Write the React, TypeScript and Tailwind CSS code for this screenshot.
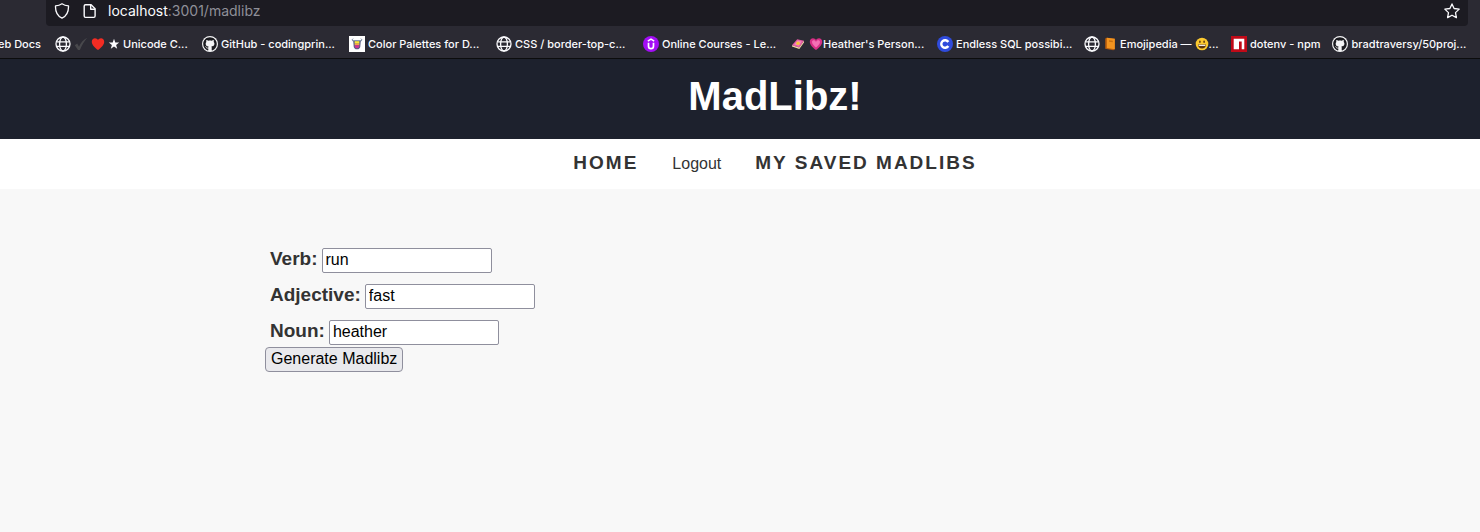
import { useState, type ReactNode } from 'react';
import { FaGithub } from 'react-icons/fa';

function Globe() {
  return (
    <svg viewBox="0 0 16 16" className="size-4 shrink-0" fill="none" stroke="#fbfbfe" strokeWidth="1.3" aria-hidden="true">
      <circle cx="8" cy="8" r="7" />
      <ellipse cx="8" cy="8" rx="3.4" ry="7" />
      <path d="M1.5 5.9h13M1.5 10.3h13" />
    </svg>
  );
}

function Github() {
  return (
    <span className="flex size-4 shrink-0 items-center justify-center rounded-full bg-[#f4f4f6]">
      <FaGithub className="size-3.5 text-[#1b1b20]" />
    </span>
  );
}

function Check() {
  return (
    <svg viewBox="0 0 14 14" className="size-3.5 shrink-0" aria-hidden="true">
      <path d="M.8 8.200 3.200 6.600 5 9.800C6.600 6 9.200 2.800 13.200.8 10.300 4.300 7.900 8.200 5.900 13H4Z" fill="#48484c" />
    </svg>
  );
}

function Heart() {
  return (
    <svg viewBox="0 0 14 14" className="size-3.5 shrink-0" aria-hidden="true">
      <path d="M7 13C4 10.700.8 8 .8 4.700.8 2.600 2.200 1.200 4 1.200c1.300 0 2.400.7 3 1.900.6-1.200 1.700-1.900 3-1.900 1.800 0 3.200 1.400 3.200 3.500C13.200 8 10 10.700 7 13Z" fill="#f32c23" />
    </svg>
  );
}

function PinkHeart() {
  return (
    <svg viewBox="0 0 14 14" className="size-3.5 shrink-0" aria-hidden="true">
      <path d="M7 13C4 10.700.8 8 .8 4.700.8 2.600 2.200 1.200 4 1.200c1.300 0 2.400.7 3 1.900.6-1.200 1.700-1.900 3-1.900 1.800 0 3.200 1.400 3.200 3.500C13.200 8 10 10.700 7 13Z" fill="#d92f86" />
      <path d="M7 10.400C5 8.800 3 7 3 5c0-2.200 3.200-2.300 4 0 .8-2.300 4-2.200 4 0 0 2-2 3.800-4 5.400Z" fill="#f570b4" />
    </svg>
  );
}

function BlackStar() {
  return (
    <svg viewBox="0 0 12 12" className="size-3 shrink-0" aria-hidden="true">
      <path d="m6 .8 1.300 3.700 3.900.1-3.100 2.400 1.100 3.800L6 8.600l-3.200 2.200 1.100-3.800L.8 4.600l3.900-.1Z" fill="#fbfbfe" />
    </svg>
  );
}

function PaletteMug() {
  return (
    <svg viewBox="0 0 16 16" className="size-4 shrink-0" aria-hidden="true">
      <path d="M0 0h16v16H0z" fill="#fff" />
      <path d="M4 2.700c-.8.6-.9 1.300-.3 2.100h8.600c.6-.8.5-1.500-.3-2.100" fill="none" stroke="#5f7390" strokeWidth="1" />
      <path d="M4.200 5h7.600l-.5 5.500c-.2 1.900-1.300 2.800-3.300 2.800s-3.100-.9-3.300-2.800Z" fill="#5a5f86" />
      <path d="M5.700 5.200h4.600v2.400H5.700z" fill="#fbe934" />
      <path d="M5.700 7.600h4.600v1.700H5.700z" fill="#f9a04b" />
      <path d="M5.700 9.300h4.600c0 2.100-.6 3-2.300 3s-2.300-.9-2.300-3Z" fill="#cf3291" />
    </svg>
  );
}

function Udemy() {
  return (
    <svg viewBox="0 0 16 16" className="size-4 shrink-0" aria-hidden="true">
      <circle cx="8" cy="8" r="8" fill="#a30df5" />
      <path d="M5.500 6.700v3.200c0 1.800.9 2.700 2.500 2.700s2.500-.9 2.500-2.700V6.700" fill="none" stroke="#fff" strokeWidth="1.700" />
      <path d="M4.800 5.200 8 3.200l3.200 2" fill="none" stroke="#fff" strokeWidth="1.500" />
    </svg>
  );
}

function PinkCard() {
  return (
    <svg viewBox="0 0 16 16" className="size-4 shrink-0" aria-hidden="true">
      <path d="m2 9.300 5.200-6L14 4.700 9.200 11.600Z" fill="#e85aa4" />
      <path d="m2 9.300 7.200 2.300L14 4.700v1.700l-4.700 6.600L2 10.600Z" fill="#f5d7a8" />
      <path d="m4.200 8.600 3.500-4 4 .9-3 4.300Z" fill="#f08bbd" />
      <circle cx="8" cy="7.200" r="1.800" fill="#f5c33b" />
    </svg>
  );
}

function LetterC() {
  return (
    <svg viewBox="0 0 16 16" className="size-4 shrink-0" aria-hidden="true">
      <circle cx="8" cy="8" r="8" fill="#2f4bdc" />
      <path d="M11.300 6A3.800 3.800 0 1 0 11.300 10" fill="none" stroke="#fff" strokeWidth="2.400" />
    </svg>
  );
}

function OrangeBook() {
  return (
    <svg viewBox="0 0 14 14" className="size-3.5 shrink-0" aria-hidden="true">
      <path d="m2.200 1.400 1.600-.7 8 1v10.500l-1.500 1-8.100-1.400Z" fill="#b35a0d" />
      <path d="m3.800.7 8 1v10.500l-8-1.300Z" fill="#f39420" />
      <path d="m6 3.300 3.800.5v1.500L6 4.800Z" fill="#c9700f" />
    </svg>
  );
}

function Smiley() {
  return (
    <svg viewBox="0 0 14 14" className="size-3.5 shrink-0" aria-hidden="true">
      <circle cx="7" cy="7" r="6.300" fill="#fcc92f" />
      <ellipse cx="4.900" cy="4.800" rx=".8" ry="1.300" fill="#5a3510" />
      <ellipse cx="9.100" cy="4.800" rx=".8" ry="1.300" fill="#5a3510" />
      <path d="M3 7.600h8c0 2.500-1.700 4-4 4s-4-1.500-4-4Z" fill="#5a3510" />
      <path d="M3.600 7.800h6.800v1.100H3.600z" fill="#fff" />
    </svg>
  );
}

function Npm() {
  return (
    <svg viewBox="0 0 16 16" className="size-4 shrink-0" aria-hidden="true">
      <path d="M0 0h16v16H0z" fill="#c00a18" />
      <path d="M2.700 2.700h10.600v10.600h-2.600V5.400H8v7.900H2.700Z" fill="#fff" />
    </svg>
  );
}

function Bookmark({ icon, compact = false, children }: { icon: ReactNode; compact?: boolean; children: ReactNode }) {
  return (
    <a
      href="#"
      className={`mr-3 flex h-4 shrink-0 items-center gap-[3px] whitespace-nowrap ${compact ? 'w-auto' : 'w-[135px]'}`}
    >
      {icon}
      {children}
    </a>
  );
}

function BrowserBar() {
  return (
    <div className="overflow-hidden border-b border-[#0c0c0d] bg-[#2b2a33] font-['Inter',sans-serif] text-[#fbfbfe]">
      <div className="mr-3 ml-[46px] flex h-[26px] items-start rounded-b bg-[#1c1b22] px-2">
        <div className="flex h-[22px] flex-1 items-center">
          <svg viewBox="0 0 16 16" className="size-4 shrink-0" fill="none" stroke="#fbfbfe" strokeWidth="1.300" strokeLinejoin="round" aria-hidden="true">
            <path d="M8 .8c1.800 1.300 4 2 6.500 2.100.2 5.200-1.500 10-6.500 12.300C3 12.900 1.300 8.100 1.500 2.900 4 2.800 6.200 2.100 8 .8Z" />
          </svg>
          <svg viewBox="0 0 16 16" className="ml-3 size-4 shrink-0" fill="none" stroke="#fbfbfe" strokeWidth="1.400" strokeLinejoin="round" aria-hidden="true">
            <path d="M3.500 1.700h5.600l4 4v7.400c0 .8-.5 1.300-1.300 1.300H3.500c-.8 0-1.300-.5-1.300-1.300V3c0-.8.5-1.300 1.300-1.300Z" />
            <path d="M8.700 1.700v4.500h4.400" />
          </svg>
          <span className="ml-2.5 text-sm text-[#8f8f98]">
            <span className="text-[#fbfbfe]">localhost</span>:3001/madlibz
          </span>
          <svg viewBox="0 0 16 16" className="ml-auto size-4 shrink-0" fill="none" stroke="#fbfbfe" strokeWidth="1.300" strokeLinejoin="round" aria-hidden="true">
            <path d="m8 .9 2.100 4.600 5.100.6-3.700 3.500.9 5L8 12.200l-4.400 2.400.9-5L.8 6.100l5.100-.6Z" />
          </svg>
        </div>
      </div>
      <nav aria-label="Bookmarks" className="flex h-8 items-center pt-1 text-[11px] font-medium">
        <a href="#" className="mr-3.5 flex w-[41px] shrink-0 justify-end whitespace-nowrap">eb Docs</a>
        <Bookmark icon={<Globe />}>
          <Check />
          <Heart />
          <BlackStar />
          <span>Unicode C...</span>
        </Bookmark>
        <Bookmark icon={<Github />}>GitHub - codingprin...</Bookmark>
        <Bookmark icon={<PaletteMug />}>Color Palettes for D...</Bookmark>
        <Bookmark icon={<Globe />}>CSS / border-top-c...</Bookmark>
        <Bookmark icon={<Udemy />}>Online Courses - Le...</Bookmark>
        <Bookmark icon={<PinkCard />}>
          <span className="flex items-center">
            <PinkHeart />
            Heather's Person...
          </span>
        </Bookmark>
        <Bookmark icon={<LetterC />}>Endless SQL possibi...</Bookmark>
        <Bookmark icon={<Globe />}>
          <OrangeBook />
          <span>Emojipedia —</span>
          <span className="flex items-center">
            <Smiley />
            ...
          </span>
        </Bookmark>
        <Bookmark icon={<Npm />} compact>dotenv - npm</Bookmark>
        <Bookmark icon={<Github />} compact>bradtraversy/50proj...</Bookmark>
      </nav>
    </div>
  );
}

const fields = [
  { id: 'verb', label: 'Verb:', initial: 'run' },
  { id: 'adjective', label: 'Adjective:', initial: 'fast' },
  { id: 'noun', label: 'Noun:', initial: 'heather' },
];

function Field({ id, label, initial }: { id: string; label: string; initial: string }) {
  const [value, setValue] = useState(initial);
  return (
    <div className="flex h-[25px] items-center gap-1 pl-[5px]">
      <label htmlFor={id} className="pb-1 text-[19px] leading-[21px] font-bold">
        {label}
      </label>
      <input
        id={id}
        type="text"
        value={value}
        onChange={(e) => setValue(e.target.value)}
        className="h-[25px] w-[170px] rounded-xs border border-[#8f8f9d] bg-white px-[3px] pb-0.5 text-base text-black"
      />
    </div>
  );
}

export default function App() {
  return (
    <div className="min-h-screen bg-[#f8f8f8] font-['Liberation_Sans',Arial,sans-serif] text-[#333]">
      <BrowserBar />
      <header className="flex h-20 items-center justify-center bg-[#1d212d] pb-1.5 pl-[70px]">
        <h1 className="text-[40px] leading-none font-bold text-white">MadLibz!</h1>
      </header>
      <nav className="flex h-[50px] items-baseline justify-center gap-[34px] bg-white pt-[13px] pl-[70px]">
        <a href="#" className="text-[19px] leading-[22px] font-bold tracking-[2px]">HOME</a>
        <a href="#" className="text-base">Logout</a>
        <a href="#" className="text-[19px] leading-[22px] font-bold tracking-[2px]">MY SAVED MADLIBS</a>
      </nav>
      <main className="pt-[59px] pl-[70px]">
        <form className="mx-auto max-w-[1020px]" onSubmit={(e) => e.preventDefault()}>
          <div className="flex flex-col gap-[11px]">
            {fields.map((f) => (
              <Field key={f.id} {...f} />
            ))}
          </div>
          <button
            type="submit"
            className="mt-0.5 flex h-[25px] items-center rounded border border-[#8f8f9d] bg-[#e9e9ed] px-[5px] pb-0.5 text-base text-black"
          >
            Generate Madlibz
          </button>
        </form>
      </main>
    </div>
  );
}
